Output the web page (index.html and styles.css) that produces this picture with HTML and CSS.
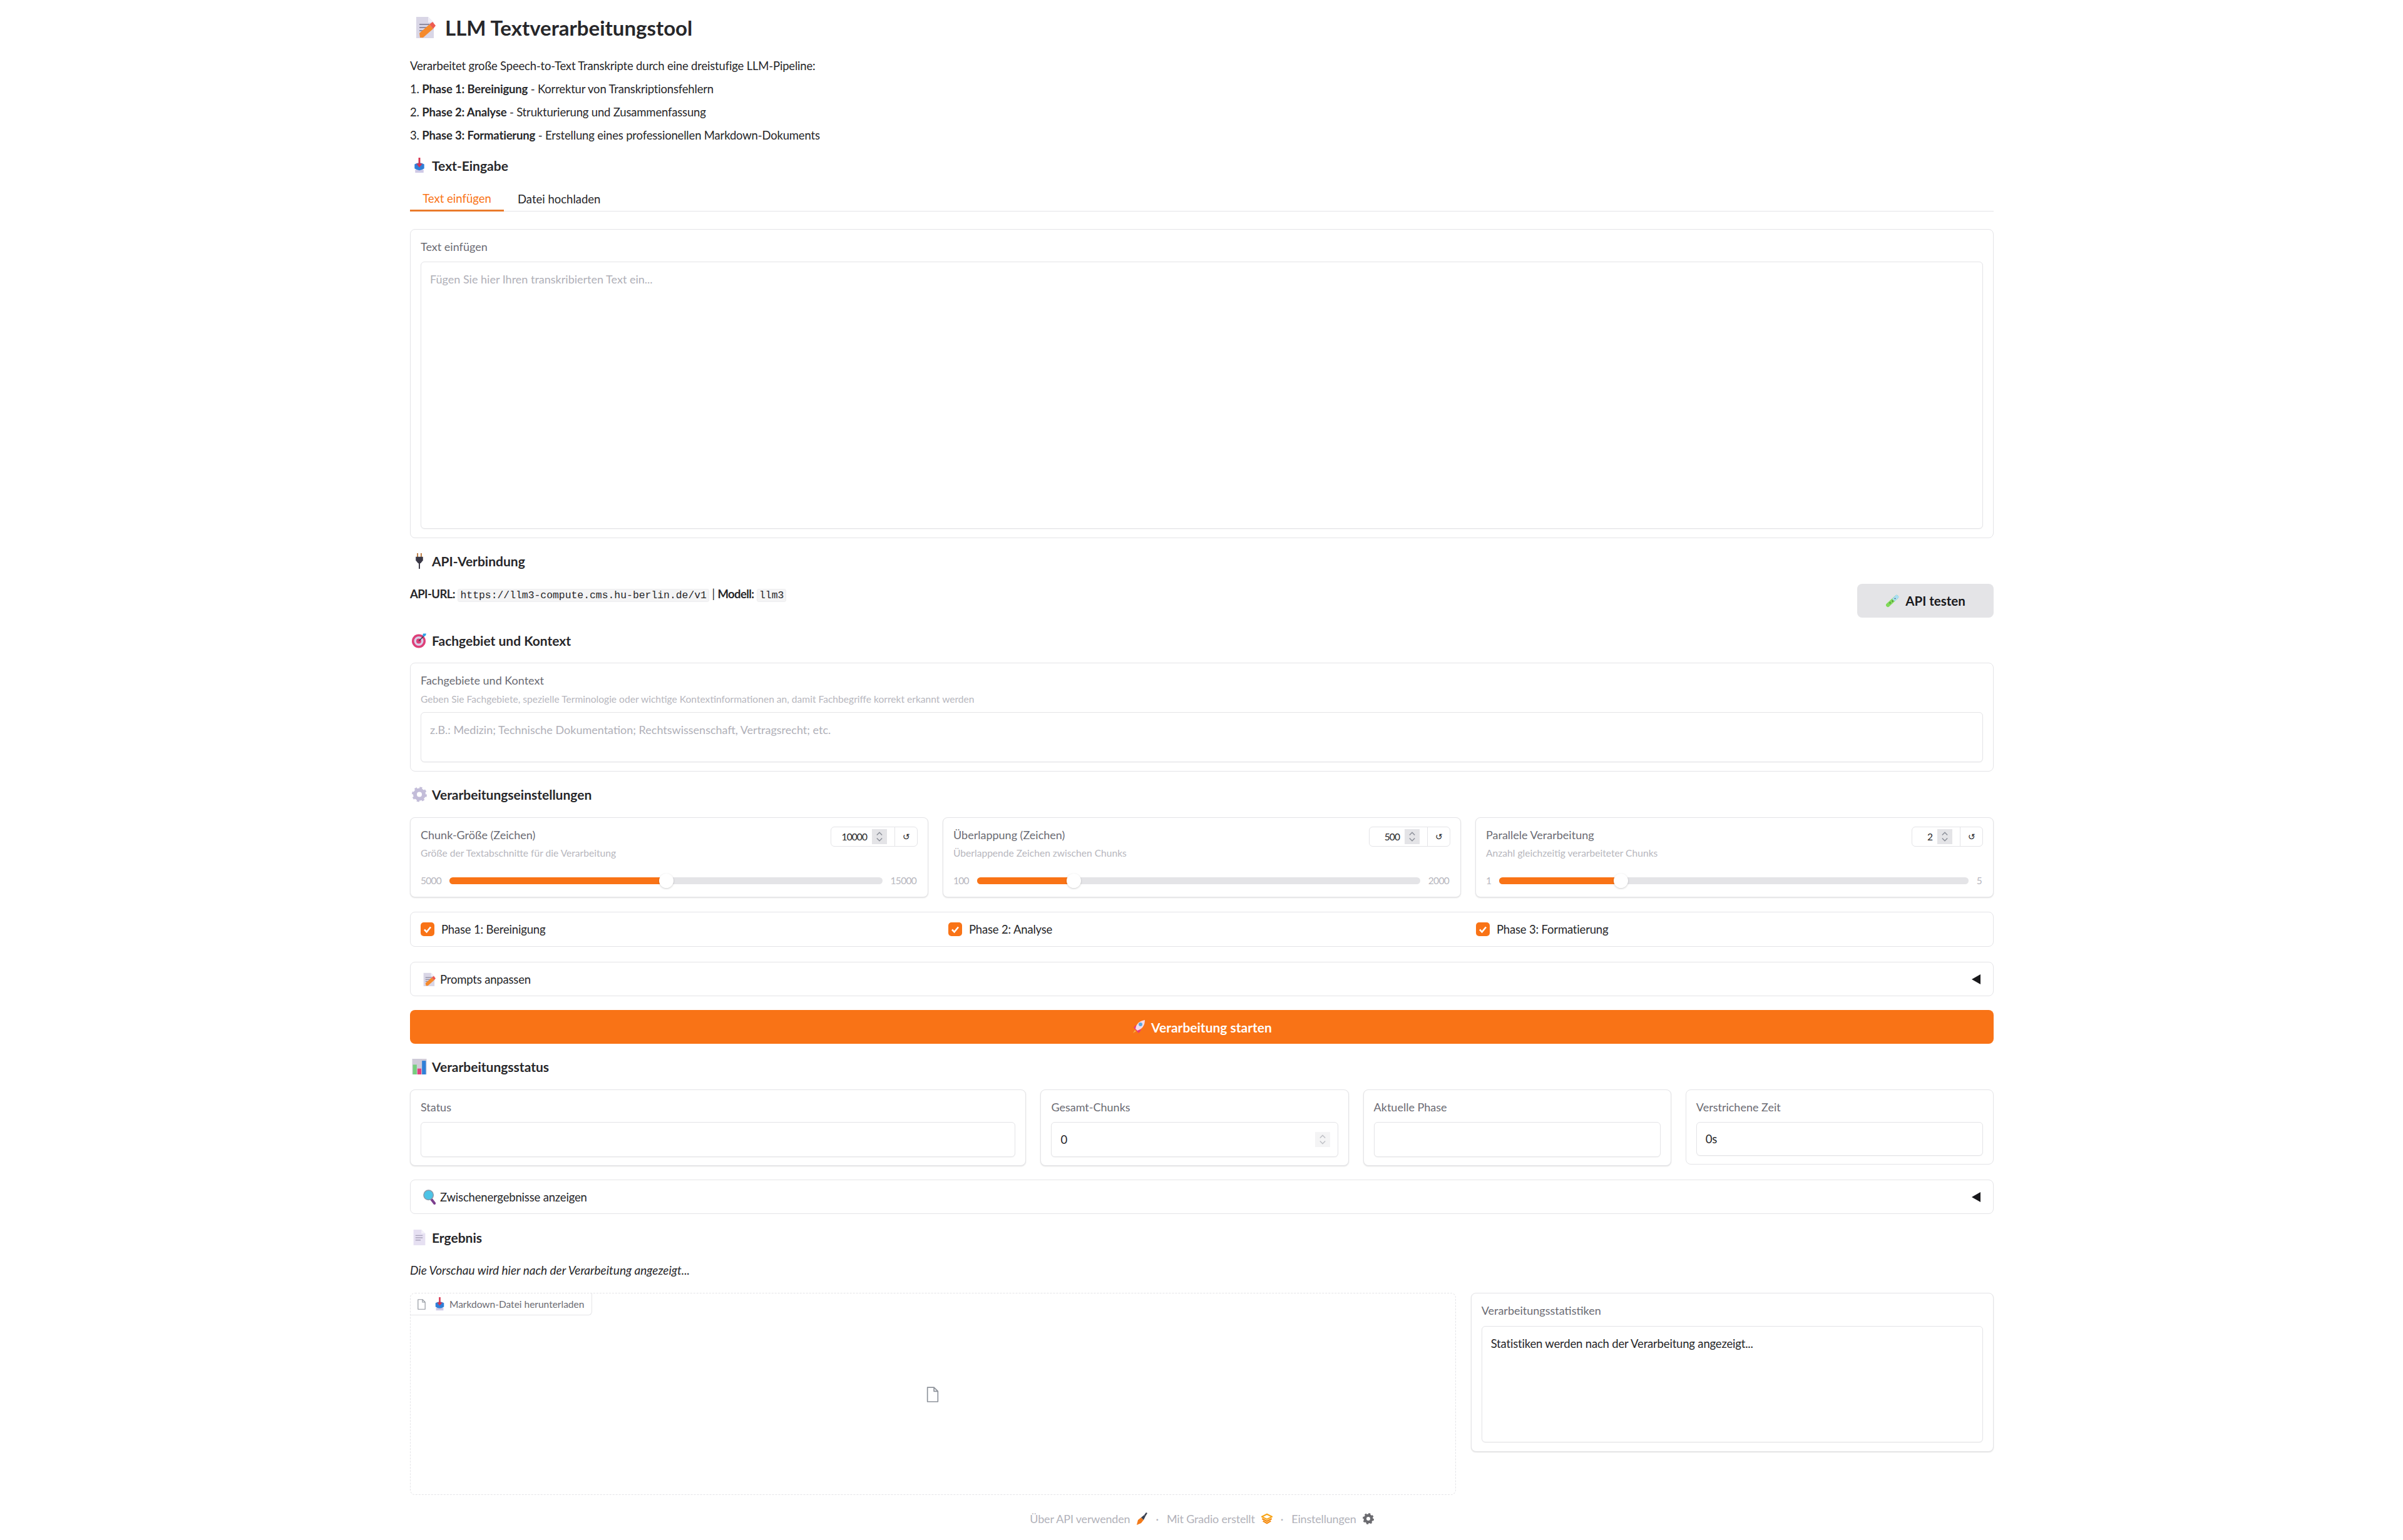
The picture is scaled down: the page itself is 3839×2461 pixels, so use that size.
FILE: index.html
```html
<!DOCTYPE html>
<html lang="de">
<head>
  <meta charset="UTF-8">
  <title>LLM Textverarbeitungstool</title>
  <link rel="stylesheet" href="styles.css">
</head>
<body>
  <svg class="sprite" xmlns="http://www.w3.org/2000/svg">
    <symbol id="i-memo" viewBox="0 0 32 35">
      <path d="M1 1h19l9 9v25H1z" fill="#d9d6e6"/>
      <path d="M20 1l9 9h-9z" fill="#f1eff7"/>
      <path d="M6 13h16M6 18h16M6 23h11" stroke="#8f8ca0" stroke-width="2"/>
      <path d="M7 34l-1-7 16-14 6 7-16 14z" fill="#f58a2c"/>
      <path d="M22 13l5-4 5 6-4 5z" fill="#ee5a4f"/>
    </symbol>
    <symbol id="i-inbox" viewBox="0 0 20 26">
      <path d="M3 20h14v5H3z" fill="#cfc9e6"/>
      <path d="M2 11q8-5 16 0v7q-8 6-16 0z" fill="#2f80d8"/>
      <path d="M10 0v13" stroke="#d8324f" stroke-width="3"/>
      <path d="M5 10l5 6 5-6z" fill="#d8324f"/>
    </symbol>
    <symbol id="i-plug" viewBox="0 0 20 26">
      <path d="M6 0h2v7H6zM12 0h2v7h-2z" fill="#b9783c"/>
      <path d="M4 6h12v6l-4 5H8l-4-5z" fill="#3a3846"/>
      <path d="M9 16h2v10H9z" fill="#3a3846"/>
    </symbol>
    <symbol id="i-target" viewBox="0 0 24 24">
      <circle cx="11" cy="13" r="11" fill="#dd3f78"/>
      <circle cx="11" cy="13" r="7.5" fill="#d9cfe8"/>
      <circle cx="11" cy="13" r="4" fill="#dd3f78"/>
      <path d="M11 13L20 4" stroke="#36404f" stroke-width="1.5"/>
      <path d="M18 1l5 0-1 3-3 2-2-2z" fill="#2ea0e6"/>
    </symbol>
    <symbol id="i-gear" viewBox="0 0 24 24">
      <circle cx="12" cy="12" r="7" fill="none" stroke="#c3bdd9" stroke-width="6"/>
      <circle cx="12" cy="12" r="10.5" fill="none" stroke="#c3bdd9" stroke-width="3" stroke-dasharray="4.1 4.15"/>
    </symbol>
    <symbol id="i-chart" viewBox="0 0 22 24">
      <path d="M0 0h22v24H0z" fill="#cfcbd8"/>
      <path d="M1 9h6v15H1z" fill="#76cf7e"/>
      <path d="M8 15h6v9H8z" fill="#e23f7c"/>
      <path d="M15 3h6v21h-6z" fill="#2f80d8"/>
    </symbol>
    <symbol id="i-lens" viewBox="0 0 22 26">
      <path d="M13 15l7 9" stroke="#7c3f8e" stroke-width="4.5" stroke-linecap="round"/>
      <circle cx="9.5" cy="9.5" r="8.5" fill="#4cc3e6" stroke="#8b98a8" stroke-width="1.6"/>
    </symbol>
    <symbol id="i-page" viewBox="0 0 18 24">
      <path d="M0 0h12l6 6v18H0z" fill="#e6e0f2"/>
      <path d="M12 0l6 6h-6z" fill="#f4f1f9"/>
      <path d="M3 9h11M3 12.5h11M3 16h8" stroke="#a9a3bb" stroke-width="1.4"/>
    </symbol>
    <symbol id="i-tube" viewBox="0 0 24 22">
      <path d="M4 18L18 5" stroke="#7fd957" stroke-width="6" stroke-linecap="round"/>
      <path d="M13 10L20 3" stroke="#a9dcf5" stroke-width="6"/>
      <path d="M7 14l1 1M11 11l1 1M15 7l1 1" stroke="#2d3a2a" stroke-width="1.4"/>
    </symbol>
    <symbol id="i-rocket" viewBox="0 0 22 24">
      <path d="M2 22l3-5 2 2z" fill="#f5b04a"/>
      <path d="M3 13l4-4 8 8-4 5z" fill="#e6397c"/>
      <path d="M6 15q2-12 15-14q0 13-12 17z" fill="#f4dbe8"/>
      <circle cx="14" cy="8" r="3" fill="#5aa9e0"/>
    </symbol>
    <symbol id="i-api" viewBox="0 0 18 20">
      <path d="M1 20l2-8 5-4 4 4-4 5z" fill="#f27a1a"/>
      <path d="M8 8l5-4 2 2-3 6z" fill="#3a4150"/>
      <path d="M13 4l3-4 2 1-3 5z" fill="#3a4150"/>
    </symbol>
    <symbol id="i-gradio" viewBox="0 0 20 18">
      <path d="M10 1l9 4.5-9 4.5-9-4.5z" fill="none" stroke="#f7a416" stroke-width="2.4"/>
      <path d="M1.5 9l8.5 4.5 8.5-4.5M3 13l7 4 7-4" fill="none" stroke="#f58a0c" stroke-width="2.4"/>
    </symbol>
    <symbol id="i-cog" viewBox="0 0 24 24">
      <circle cx="12" cy="12" r="7" fill="#fff" stroke="#6b6b70" stroke-width="6"/>
      <circle cx="12" cy="12" r="10.5" fill="none" stroke="#6b6b70" stroke-width="3" stroke-dasharray="4.1 4.15"/>
    </symbol>
    <symbol id="i-file" viewBox="0 0 18 24">
      <path d="M1 1h10l6 6v16H1z M11 1v6h6" fill="none" stroke="#8e939b" stroke-width="1.6" stroke-linejoin="round"/>
    </symbol>
    <symbol id="i-spin" viewBox="0 0 24 24">
      <path d="M7 9l5-5 5 5M7 15l5 5 5-5" fill="none" stroke="#8b8f98" stroke-width="1.8"/>
    </symbol>
    <symbol id="i-check" viewBox="0 0 22 22">
      <path d="M6 11.5l3.6 3.8L16 7.5" fill="none" stroke="#fff" stroke-width="2.6"/>
    </symbol>
  </svg>

  <main class="page">
    <h1 class="title"><svg class="ico-title"><use href="#i-memo"/></svg>LLM Textverarbeitungstool</h1>

    <div class="intro">
      <p>Verarbeitet große Speech-to-Text Transkripte durch eine dreistufige LLM-Pipeline:</p>
      <p>1. <b>Phase 1: Bereinigung</b> - Korrektur von Transkriptionsfehlern</p>
      <p>2. <b>Phase 2: Analyse</b> - Strukturierung und Zusammenfassung</p>
      <p>3. <b>Phase 3: Formatierung</b> - Erstellung eines professionellen Markdown-Dokuments</p>
    </div>

    <h2 class="heading mt-13"><span class="heading-ico"><svg class="ico-h"><use href="#i-inbox"/></svg></span>Text-Eingabe</h2>

    <div class="tabs">
      <button class="tab active">Text einfügen</button>
      <button class="tab">Datei hochladen</button>
    </div>

    <section class="card card-text">
      <div class="label">Text einfügen</div>
      <div class="field field-big placeholder">Fügen Sie hier Ihren transkribierten Text ein...</div>
    </section>

    <h2 class="heading mt-20"><span class="heading-ico"><svg class="ico-h"><use href="#i-plug"/></svg></span>API-Verbindung</h2>

    <div class="api-row">
      <div class="api-info"><b>API-URL:</b> <code>https://llm3-compute.cms.hu-berlin.de/v1</code> | <b>Modell:</b> <code>llm3</code></div>
      <button class="btn-test"><svg class="ico-tube"><use href="#i-tube"/></svg>API testen</button>
    </div>

    <h2 class="heading mt-20"><span class="heading-ico"><svg class="ico-h"><use href="#i-target"/></svg></span>Fachgebiet und Kontext</h2>

    <section class="card card-context">
      <div class="label">Fachgebiete und Kontext</div>
      <div class="info">Geben Sie Fachgebiete, spezielle Terminologie oder wichtige Kontextinformationen an, damit Fachbegriffe korrekt erkannt werden</div>
      <div class="field field-context placeholder">z.B.: Medizin; Technische Dokumentation; Rechtswissenschaft, Vertragsrecht; etc.</div>
    </section>

    <h2 class="heading mt-20"><span class="heading-ico"><svg class="ico-h"><use href="#i-gear"/></svg></span>Verarbeitungseinstellungen</h2>

    <div class="sliders">
      <section class="card slider-card">
        <div class="slider-head">
          <div>
            <div class="label label-slider">Chunk-Größe (Zeichen)</div>
            <div class="info info-slider">Größe der Textabschnitte für die Verarbeitung</div>
          </div>
          <div class="num-box">
            <span class="num-val num-lg">10000</span>
            <span class="spin"><svg class="ico-spin"><use href="#i-spin"/></svg></span>
            <span class="reset">↺</span>
          </div>
        </div>
        <div class="slider-row">
          <span class="range-end">5000</span>
          <div class="track"><div class="fill" style="width: 50%"></div><div class="thumb" style="left: 50%"></div></div>
          <span class="range-end">15000</span>
        </div>
      </section>

      <section class="card slider-card">
        <div class="slider-head">
          <div>
            <div class="label label-slider">Überlappung (Zeichen)</div>
            <div class="info info-slider">Überlappende Zeichen zwischen Chunks</div>
          </div>
          <div class="num-box">
            <span class="num-val num-md">500</span>
            <span class="spin"><svg class="ico-spin"><use href="#i-spin"/></svg></span>
            <span class="reset">↺</span>
          </div>
        </div>
        <div class="slider-row">
          <span class="range-end">100</span>
          <div class="track"><div class="fill" style="width: 21.8%"></div><div class="thumb" style="left: 21.8%"></div></div>
          <span class="range-end">2000</span>
        </div>
      </section>

      <section class="card slider-card">
        <div class="slider-head">
          <div>
            <div class="label label-slider">Parallele Verarbeitung</div>
            <div class="info info-slider">Anzahl gleichzeitig verarbeiteter Chunks</div>
          </div>
          <div class="num-box">
            <span class="num-val num-sm">2</span>
            <span class="spin"><svg class="ico-spin"><use href="#i-spin"/></svg></span>
            <span class="reset">↺</span>
          </div>
        </div>
        <div class="slider-row">
          <span class="range-end">1</span>
          <div class="track"><div class="fill" style="width: 25.8%"></div><div class="thumb" style="left: 25.8%"></div></div>
          <span class="range-end">5</span>
        </div>
      </section>
    </div>

    <section class="card phases">
      <label class="phase"><span class="check"><svg class="ico-check"><use href="#i-check"/></svg></span>Phase 1: Bereinigung</label>
      <label class="phase"><span class="check"><svg class="ico-check"><use href="#i-check"/></svg></span>Phase 2: Analyse</label>
      <label class="phase"><span class="check"><svg class="ico-check"><use href="#i-check"/></svg></span>Phase 3: Formatierung</label>
    </section>

    <section class="card accordion acc-prompts">
      <span class="acc-label"><svg class="ico-acc"><use href="#i-memo"/></svg>Prompts anpassen</span>
      <span class="arrow"></span>
    </section>

    <button class="btn-start"><svg class="ico-rocket"><use href="#i-rocket"/></svg>Verarbeitung starten</button>

    <h2 class="heading mt-20"><span class="heading-ico"><svg class="ico-h"><use href="#i-chart"/></svg></span>Verarbeitungsstatus</h2>

    <div class="status-grid">
      <section class="card status-card raised">
        <div class="label">Status</div>
        <div class="field field-status"></div>
      </section>
      <section class="card status-card raised">
        <div class="label">Gesamt-Chunks</div>
        <div class="field field-status value">0<span class="spin spin-light"><svg class="ico-spin"><use href="#i-spin"/></svg></span></div>
      </section>
      <section class="card status-card raised">
        <div class="label">Aktuelle Phase</div>
        <div class="field field-status"></div>
      </section>
      <section class="card status-card status-short">
        <div class="label">Verstrichene Zeit</div>
        <div class="field field-short value">0s</div>
      </section>
    </div>

    <section class="card accordion acc-inter">
      <span class="acc-label"><svg class="ico-acc"><use href="#i-lens"/></svg>Zwischenergebnisse anzeigen</span>
      <span class="arrow"></span>
    </section>

    <h2 class="heading mt-21"><span class="heading-ico"><svg class="ico-h"><use href="#i-page"/></svg></span>Ergebnis</h2>

    <p class="preview"><em>Die Vorschau wird hier nach der Verarbeitung angezeigt...</em></p>

    <div class="result-grid">
      <section class="file-box">
        <div class="file-tag">
          <svg class="ico-tagfile"><use href="#i-file"/></svg>
          <svg class="ico-taginbox"><use href="#i-inbox"/></svg>
          Markdown-Datei herunterladen
        </div>
        <div class="file-empty"><svg class="ico-empty"><use href="#i-file"/></svg></div>
      </section>
      <section class="card stats-card raised">
        <div class="label">Verarbeitungsstatistiken</div>
        <div class="field field-stats">Statistiken werden nach der Verarbeitung angezeigt...</div>
      </section>
    </div>

    <footer class="footer">
      <span>Über API verwenden</span><svg class="ico-foot"><use href="#i-api"/></svg>
      <span class="dot">·</span>
      <span>Mit Gradio erstellt</span><svg class="ico-foot"><use href="#i-gradio"/></svg>
      <span class="dot">·</span>
      <span>Einstellungen</span><svg class="ico-foot"><use href="#i-cog"/></svg>
    </footer>
  </main>
</body>
</html>
```

FILE: styles.css
```css
* {
  margin: 0;
  padding: 0;
  box-sizing: border-box;
}

html, body {
  background: #fff;
}

body {
  font-family: Lato, "Noto Sans", Arial, sans-serif;
  font-size: 18.5px;
  letter-spacing: -0.18px;
  color: #27272a;
}

.sprite {
  display: none;
}

.page {
  width: 2530px;
  margin-left: 655px;
}

button {
  font-family: inherit;
  border: 0;
}

/* headings */
.title {
  display: flex;
  align-items: center;
  height: 87px;
  padding-left: 9px;
  font-size: 33px;
  font-weight: 700;
  letter-spacing: 0;
}

.ico-title {
  width: 32px;
  height: 35px;
  margin-right: 15px;
}

.intro p {
  line-height: 37px;
}

.heading {
  display: flex;
  align-items: center;
  height: 34px;
  padding-bottom: 2px;
  font-size: 21px;
  font-weight: 700;
  letter-spacing: 0;
}

.heading-ico {
  display: flex;
  justify-content: center;
  width: 30px;
  margin-right: 5px;
}

.ico-h {
  width: 24px;
  height: 25px;
}

.mt-13 { margin-top: 13px; }
.mt-20 { margin-top: 20px; }
.mt-21 { margin-top: 21px; }

/* tabs */
.tabs {
  display: flex;
  gap: 22px;
  height: 40px;
  margin-top: 16px;
  border-bottom: 1px solid #e4e4e7;
}

.tab {
  height: 40px;
  width: 150px;
  background: none;
  font-size: 18.5px;
  white-space: nowrap;
  color: #27272a;
}

.tab + .tab {
  width: 129px;
}

.tab.active {
  color: #f97316;
  border-bottom: 3px solid #ea7a2b;
}

/* cards */
.card {
  border: 1px solid #e4e4e7;
  border-radius: 8px;
  background: #fff;
  padding: 16px;
}

.raised {
  box-shadow: 0 1px 2px rgba(0, 0, 0, 0.12);
}

.label {
  height: 24px;
  line-height: 22px;
  font-size: 18px;
  letter-spacing: 0;
  color: #6b6b73;
}

.info {
  height: 24px;
  margin-top: 6px;
  line-height: 22px;
  font-size: 15.6px;
  letter-spacing: 0;
  color: #b7b7be;
}

.field {
  border: 1px solid #e4e4e7;
  border-radius: 6px;
  padding: 0 14px;
  background: #fff;
  box-shadow: 0 1px 1px rgba(0, 0, 0, 0.04);
}

.placeholder {
  font-size: 18px;
  letter-spacing: 0;
  color: #b0b0b8;
}

.card-text {
  height: 494px;
  margin-top: 28px;
}

.field-big {
  height: 427px;
  margin-top: 11px;
  padding-top: 16px;
}

.card-context {
  height: 174px;
  margin-top: 18px;
}

.field-context {
  height: 80px;
  margin-top: 8px;
  padding-top: 16px;
}

/* api row */
.api-row {
  display: flex;
  justify-content: space-between;
  align-items: flex-start;
  height: 54px;
  margin-top: 19px;
}

.api-info {
  margin-top: 4px;
  line-height: 24px;
}

.api-info b {
  letter-spacing: -0.6px;
}

code {
  display: inline-block;
  height: 21px;
  padding: 0 3px;
  border: 1px solid #eeeef0;
  border-radius: 3px;
  background: #f4f4f5;
  font-family: "Liberation Mono", monospace;
  font-size: 16.4px;
  letter-spacing: 0;
  line-height: 19px;
  color: #27272a;
}

.btn-test {
  display: flex;
  align-items: center;
  justify-content: center;
  width: 218px;
  height: 54px;
  border-radius: 8px;
  background: #e4e4e7;
  font-size: 20.5px;
  font-weight: 700;
  color: #18181b;
}

.ico-tube {
  width: 24px;
  height: 22px;
  margin-right: 8px;
}

/* sliders */
.sliders {
  display: grid;
  grid-template-columns: repeat(3, 1fr);
  gap: 23px;
  margin-top: 19px;
}

.slider-card {
  height: 128px;
  padding-top: 14px;
  box-shadow: 0 1px 2px rgba(0, 0, 0, 0.12);
}

.slider-head {
  display: flex;
  justify-content: space-between;
  align-items: flex-start;
  height: 55px;
}

.label-slider {
  margin-top: 2px;
}

.info-slider {
  margin-top: 5px;
}

.num-box {
  display: flex;
  align-items: center;
  height: 32px;
  border: 1px solid #e4e4e7;
  border-radius: 6px;
  font-size: 15.5px;
  letter-spacing: -0.9px;
}

.num-val {
  padding-right: 8px;
  text-align: right;
}

.num-lg { width: 65px; }
.num-md { width: 56px; }
.num-sm { width: 40px; }

.spin {
  display: flex;
  align-items: center;
  justify-content: center;
  width: 24px;
  height: 24px;
  background: #e4e4e7;
}

.ico-spin {
  width: 20px;
  height: 22px;
}

.reset {
  width: 36px;
  margin-left: 12px;
  border-left: 1px solid #e4e4e7;
  height: 30px;
  line-height: 30px;
  text-align: center;
  font-family: "DejaVu Sans", sans-serif;
  font-size: 14px;
  letter-spacing: 0;
}

.slider-row {
  display: flex;
  align-items: center;
  gap: 13px;
  height: 26px;
  margin-top: 18px;
  padding-right: 2px;
}

.range-end {
  font-size: 15.5px;
  letter-spacing: -0.7px;
  color: #b7b7be;
}

.track {
  position: relative;
  flex: 1;
  height: 11px;
  border-radius: 6px;
  background: #e4e4e7;
}

.fill {
  height: 100%;
  border-radius: 6px 0 0 6px;
  background: #f97316;
}

.thumb {
  position: absolute;
  top: -6px;
  width: 23px;
  height: 23px;
  margin-left: -11px;
  border-radius: 50%;
  background: #fff;
  box-shadow: 0 1px 3px rgba(0, 0, 0, 0.2);
}

/* phases */
.phases {
  display: grid;
  grid-template-columns: repeat(3, 1fr);
  gap: 33px;
  align-items: center;
  height: 56px;
  margin-top: 23px;
  padding: 0 16px;
}

.phase {
  display: flex;
  align-items: center;
  gap: 11px;
}

.check {
  display: block;
  width: 22px;
  height: 22px;
  border-radius: 5px;
  background: #f97316;
}

.ico-check {
  display: block;
  width: 22px;
  height: 22px;
}

/* accordions */
.accordion {
  display: flex;
  justify-content: space-between;
  align-items: center;
  height: 55px;
  padding: 0 20px 0 20px;
}

.acc-prompts {
  margin-top: 24px;
}

.acc-inter {
  margin-top: 22px;
}

.acc-label {
  display: flex;
  align-items: center;
}

.ico-acc {
  width: 20px;
  height: 24px;
  margin-right: 7px;
}

.arrow {
  width: 0;
  height: 0;
  border-top: 8px solid transparent;
  border-bottom: 8px solid transparent;
  border-right: 14px solid #18181b;
}

/* start button */
.btn-start {
  display: flex;
  align-items: center;
  justify-content: center;
  width: 100%;
  height: 54px;
  margin-top: 22px;
  border-radius: 8px;
  background: #f97316;
  font-size: 21px;
  font-weight: 700;
  color: #fff;
}

.ico-rocket {
  width: 22px;
  height: 24px;
  margin-right: 9px;
}

/* status */
.status-grid {
  display: grid;
  grid-template-columns: 2fr 1fr 1fr 1fr;
  gap: 23px;
  align-items: start;
  margin-top: 19px;
}

.status-card {
  height: 122px;
  padding-top: 16px;
}

.status-short {
  height: 120px;
}

.field-status,
.field-short {
  display: flex;
  align-items: center;
  justify-content: space-between;
  height: 56px;
  margin-top: 11px;
  padding-right: 12px;
}

.field-short {
  height: 54px;
}

.spin-light {
  background: #f4f4f5;
}

.spin-light .ico-spin {
  opacity: 0.5;
}

/* results */
.preview {
  height: 24px;
  margin-top: 23px;
  font-size: 19px;
  letter-spacing: 0;
  line-height: 24px;
}

.result-grid {
  display: grid;
  grid-template-columns: 2fr 1fr;
  gap: 24px;
  align-items: start;
  margin-top: 24px;
}

.file-box {
  height: 323px;
  border: 1px dashed #e4e4e7;
  border-radius: 8px;
}

.file-tag {
  display: flex;
  align-items: center;
  width: 290px;
  height: 35px;
  padding-left: 11px;
  border-right: 1px solid #e4e4e7;
  border-bottom: 1px solid #e4e4e7;
  border-radius: 0 0 6px 0;
  font-size: 15.5px;
  letter-spacing: 0;
  color: #6b6b73;
}

.ico-tagfile {
  width: 13px;
  height: 17px;
  margin-right: 14px;
}

.ico-taginbox {
  width: 17px;
  height: 22px;
  margin-right: 7px;
}

.file-empty {
  display: flex;
  align-items: center;
  justify-content: center;
  height: 286px;
  padding-bottom: 34px;
}

.ico-empty {
  width: 20px;
  height: 25px;
}

.stats-card {
  height: 254px;
}

.field-stats {
  height: 186px;
  margin-top: 12px;
  padding-top: 16px;
  line-height: 22px;
}

/* footer */
.footer {
  display: flex;
  align-items: center;
  justify-content: center;
  height: 24px;
  margin-top: 26px;
  font-size: 18px;
  color: #b2b2ba;
}

.ico-foot {
  width: 18px;
  height: 20px;
  margin-left: 10px;
}

.dot {
  margin: 0 13px;
}
```
